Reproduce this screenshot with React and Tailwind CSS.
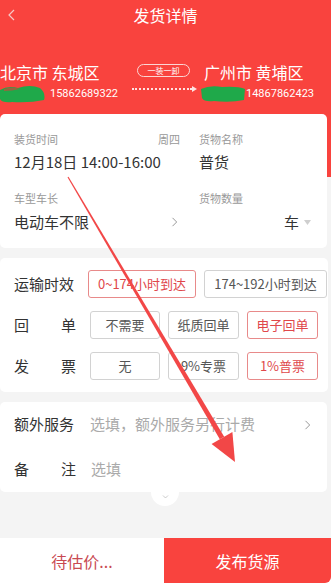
import React from "react";

const RED = "bg-[#f9433e]";

function Chevron({ className = "", dir = "right" }) {
  const d = {
    right: "M3 1 L8 6 L3 11",
    left: "M8 1 L3 6 L8 11",
    down: "M1 3 L6 8 L11 3",
  }[dir];
  return (
    <svg viewBox="0 0 12 12" className={className} fill="none" stroke="currentColor" strokeWidth="1.2">
      <path d={d} />
    </svg>
  );
}

function Blob({ flip }) {
  return (
    <svg width="46" height="18" viewBox="0 0 46 18">
      <path
        d={flip ? "M1 4 Q10 0 22 2 Q38 1 45 4 L44 15 Q30 18 14 16 Q4 17 2 13 Z" : "M0 5 Q8 0 18 3 Q30 -1 40 3 Q46 8 44 15 Q30 18 12 17 Q2 18 0 14 Z"}
        fill="#1fa94a"
      />
      {!flip && <path d="M4 4 Q12 1 20 4 Q12 6 4 6 Z" fill="#c64a3a" opacity="0.7" />}
    </svg>
  );
}

function Opt({ children, active, className = "" }) {
  return (
    <div
      className={`h-[28px] flex items-center justify-center rounded-[3px] border text-[13px] ${
        active ? "border-[#e88a8a] text-[#e0474b]" : "border-[#d2d2d2] text-[#555]"
      } ${className}`}
    >
      {children}
    </div>
  );
}

function Label2({ a, b }) {
  return (
    <div className="w-[62px] flex justify-between text-[15px] text-[#333]">
      <span>{a}</span>
      <span>{b}</span>
    </div>
  );
}

export default function App() {
  return (
    <div
      className="relative w-[334px] h-[588px] bg-white overflow-hidden"
      style={{ fontFamily: '"Noto Sans CJK SC", "Noto Sans", sans-serif' }}
    >
      <div className="w-[331px] bg-[#f4f4f4] flex flex-col">
        {/* header */}
        <div className={`${RED} h-[177px] text-white`}>
          <div className="relative h-[30px] flex items-center justify-center">
            <Chevron dir="left" className="absolute left-[6px] top-[8px] w-[12px] h-[14px] text-[#f7c8c6]" />
            <span className="text-[16px] leading-none">发货详情</span>
          </div>
          <div className="flex pt-[32px]">
            <div className="w-[132px]">
              <div className="text-[16px] leading-[20px]">北京市 东城区</div>
              <div className="mt-[4px] flex items-center h-[16px]">
                <Blob />
                <span className="ml-[4px] text-[11px]" style={{ fontFamily: "Roboto, sans-serif" }}>
                  15862689322
                </span>
              </div>
            </div>
            <div className="w-[68px] flex flex-col items-start">
              <div className="ml-[5px] mt-[2px] w-[53px] h-[13px] rounded-full border border-[#fbd6d4] flex items-center justify-center text-[8px] leading-none">
                一装一卸
              </div>
              <div className="mt-[9px] flex items-center">
                <div className="w-[60px] border-t-2 border-dotted border-[#fde3e2]" />
                <svg width="5" height="6" viewBox="0 0 5 6">
                  <path d="M0 0 L5 3 L0 6 Z" fill="#fde3e2" />
                </svg>
              </div>
            </div>
            <div className="pl-[4px]">
              <div className="text-[16px] leading-[20px]">广州市 黄埔区</div>
              <div className="mt-[4px] flex items-center h-[16px] -ml-[4px]">
                <Blob flip />
                <span className="text-[11px]" style={{ fontFamily: "Roboto, sans-serif" }}>
                  14867862423
                </span>
              </div>
            </div>
          </div>
        </div>

        {/* card 1 */}
        <div className="relative -mt-[63px] w-[327px] bg-white rounded-[5px] px-[14px] pt-[19px] pb-[16px] flex">
          <div className="w-[166px]">
            <div className="flex justify-between text-[11px] leading-[12px] text-[#999]">
              <span>装货时间</span>
              <span>周四</span>
            </div>
            <div className="mt-[7px] text-[15px] leading-[20px] text-[#333]">12月18日 14:00-16:00</div>
            <div className="mt-[20px] text-[11px] leading-[12px] text-[#999]">车型车长</div>
            <div className="mt-[8px] flex justify-between items-center text-[15px] leading-[20px] text-[#333]">
              <span>电动车不限</span>
              <Chevron className="w-[10px] h-[12px] text-[#999]" />
            </div>
          </div>
          <div className="ml-[19px] w-[112px]">
            <div className="text-[11px] leading-[12px] text-[#999]">货物名称</div>
            <div className="mt-[7px] text-[15px] leading-[20px] text-[#333]">普货</div>
            <div className="mt-[20px] text-[11px] leading-[12px] text-[#999]">货物数量</div>
            <div className="mt-[8px] flex justify-end items-center text-[15px] leading-[20px] text-[#333]">
              <span>车</span>
              <svg width="7" height="5" viewBox="0 0 7 5" className="ml-[5px]">
                <path d="M0 0 L7 0 L3.5 5 Z" fill="#cfcfcf" />
              </svg>
            </div>
          </div>
        </div>

        {/* card 2 */}
        <div className="mt-[10px] w-[328px] bg-white rounded-[5px] pl-[14px] py-[12px] flex flex-col gap-[13px]">
          <div className="flex items-center">
            <div className="w-[62px] text-[15px] text-[#333]">运输时效</div>
            <Opt active className="ml-[12px] w-[108px]">0~174小时到达</Opt>
            <Opt className="ml-[8px] w-[123px]">174~192小时到达</Opt>
          </div>
          <div className="flex items-center">
            <Label2 a="回" b="单" />
            <Opt className="ml-[14px] w-[70px]">不需要</Opt>
            <Opt className="ml-[8px] w-[71px]">纸质回单</Opt>
            <Opt active className="ml-[8px] w-[71px]">电子回单</Opt>
          </div>
          <div className="flex items-center">
            <Label2 a="发" b="票" />
            <Opt className="ml-[14px] w-[70px]">无</Opt>
            <Opt className="ml-[8px] w-[71px]">9%专票</Opt>
            <Opt active className="ml-[8px] w-[71px]">1%普票</Opt>
          </div>
        </div>

        {/* card 3 */}
        <div className="mt-[10px] w-[327px] bg-white rounded-[5px] pl-[14px] pr-[14px]">
          <div className="h-[45px] flex items-center text-[15px]">
            <div className="w-[62px] text-[#333]">额外服务</div>
            <div className="ml-[14px] flex-1 text-[#aaa]">选填，额外服务另行计费</div>
            <Chevron className="w-[10px] h-[12px] text-[#999]" />
          </div>
          <div className="h-[45px] flex items-center text-[15px]">
            <Label2 a="备" b="注" />
            <div className="ml-[15px] text-[#aaa]">选填</div>
          </div>
        </div>
        <div className="h-[46px] flex items-start">
          <div className="-mt-[14px] ml-[151px] w-[28px] h-[28px] rounded-full bg-white flex justify-center pt-[16px]">
            <Chevron dir="down" className="w-[9px] h-[6px] text-[#aaa]" />
          </div>
        </div>

        {/* bottom bar */}
        <div className="flex h-[45px] bg-white">
          <div className="w-[164px] flex items-center justify-center text-[16px] text-[#c94a52]">待估价...</div>
          <div className={`flex-1 ${RED} rounded-br-[6px] flex items-center justify-center text-[16px] text-white`}>
            发布货源
          </div>
        </div>
      </div>

      {/* annotation arrow */}
      <svg className="absolute inset-0 pointer-events-none" width="334" height="588" viewBox="0 0 334 588">
        <polygon points="68.5,176.7 67.5,177.3 219.8,439.3 224.2,436.7" fill="#f24747" />
        <polygon points="235,462 211.6,444.1 232.4,431.9" fill="#f24747" />
      </svg>
    </div>
  );
}
